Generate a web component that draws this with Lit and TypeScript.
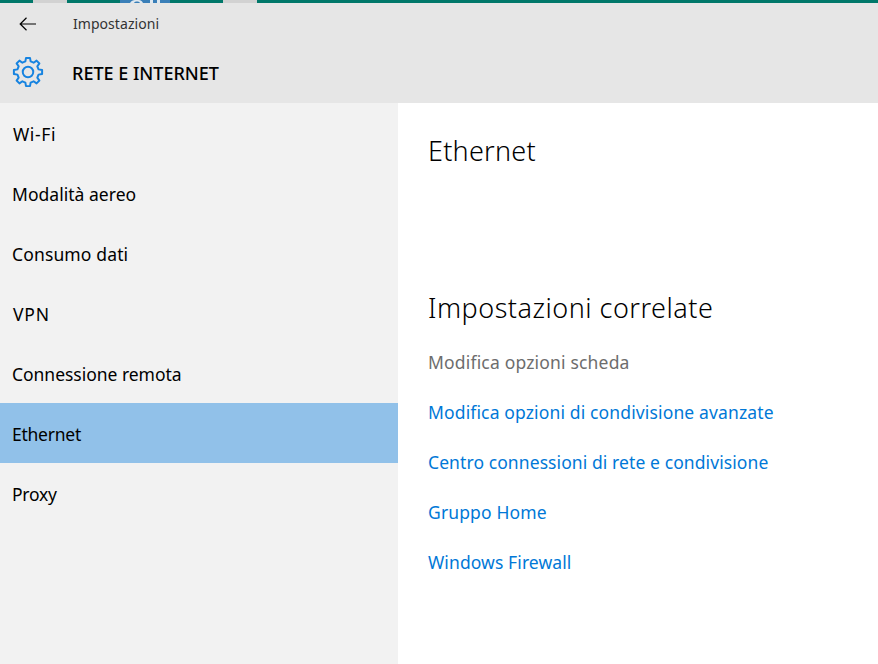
import { LitElement, html, css } from "lit";
import { customElement } from "lit/decorators.js";

const NAV: [string, number, number][] = [
  ["Wi-Fi", 13, 0.6],
  ["Modalità aereo", 12, 0.03],
  ["Consumo dati", 12, 0.14],
  ["VPN", 13, 0.8],
  ["Connessione remota", 12, -0.03],
  ["Ethernet", 12, -0.25],
  ["Proxy", 12, -0.25],
];
const LINKS: [string, number][] = [
  ["Modifica opzioni di condivisione avanzate", 0.14],
  ["Centro connessioni di rete e condivisione", 0.09],
  ["Gruppo Home", 0.14],
  ["Windows Firewall", 0.1],
];

function gearPath(): string {
  const cx = 28, cy = 28, teeth = 8, rO = 15.2, rI = 11.6;
  const pts: string[] = [];
  for (let i = 0; i < teeth; i++) {
    const a = (i * 2 * Math.PI) / teeth - Math.PI / 2;
    const w = Math.PI / teeth;
    const seq: [number, number][] = [
      [rI, a - w * 0.62],
      [rO, a - w * 0.36],
      [rO, a + w * 0.36],
      [rI, a + w * 0.62],
    ];
    for (const [r, t] of seq) {
      pts.push(`${(cx + r * Math.cos(t)).toFixed(2)} ${(cy + r * Math.sin(t)).toFixed(2)}`);
    }
  }
  return "M" + pts.join("L") + "Z";
}

@customElement("app-root")
export class AppRoot extends LitElement {
  static styles = css`
    :host {
      display: flex;
      flex-direction: column;
      width: 878px;
      height: 664px;
      overflow: hidden;
      font-family: "Noto Sans", "Open Sans", sans-serif;
      background: #fff;
      color: #000;
    }
    .strip {
      display: flex;
      height: 3px;
      flex: none;
      background: #00786a;
    }
    .patch { height: 3px; background: #d2d2d2; }
    .p1 { margin-left: 33px; width: 34px; }
    .p2 { margin-left: 53px; width: 50px; background: #3a7fb8; display: block; }
    .p3 { margin-left: 53px; width: 34px; }
    header {
      flex: none;
      height: 100px;
      background: #e6e6e6;
      display: flex;
      flex-direction: column;
    }
    .top {
      height: 41px;
      display: flex;
      align-items: center;
      padding-left: 19px;
      box-sizing: border-box;
    }
    .back { width: 17px; height: 14px; display: block; margin-top: 1px; }
    .app {
      margin-left: 37px;
      font-size: 14px;
      color: #333;
      letter-spacing: 0.05px;
    }
    .title {
      height: 59px;
      display: flex;
      align-items: flex-start;
      padding-left: 13px;
    }
    .gear { width: 30px; height: 30px; display: block; margin-top: 13px; overflow: visible; }
    .title span {
      margin-left: 29px;
      margin-top: 17px;
      font-size: 18px;
      font-weight: 500;
      line-height: 24px;
    }
    .body { flex: 1; display: flex; min-height: 0; }
    nav { width: 398px; flex: none; background: #f2f2f2; }
    .item {
      height: 60px;
      display: flex;
      align-items: center;
      padding-top: 2px;
      font-size: 17.5px;
      box-sizing: border-box;
    }
    .item.on { background: #91c1e9; }
    main { flex: 1; padding: 28px 0 0 30px; }
    h1, h2 { margin: 0; font-weight: 300; }
    h1 { font-size: 27px; line-height: 40px; letter-spacing: 0.25px; }
    h2 { font-size: 27px; line-height: 40px; margin-top: 117px; letter-spacing: 0.5px; }
    .off, .link { font-size: 17.5px; line-height: 50px; }
    .off { color: #6d6d6d; margin-top: 9px; letter-spacing: 0.18px; }
    .link { color: #0078d7; }
  `;

  render() {
    return html`
      <div class="strip">
        <div class="patch p1"></div>
        <svg class="patch p2" viewBox="0 0 50 3">
          <path d="M10 3C11 .5 14 0 17 0s5 .5 6 3h-3c-.5-1-2-1.400-3-1.400S14.500 2 14 3Z" fill="#dfe8ef" />
          <rect x="30" y="0" width="3" height="3" fill="#dfe8ef" />
          <rect x="37" y="0" width="3" height="3" fill="#dfe8ef" />
        </svg>
        <div class="patch p3"></div>
      </div>
      <header>
        <div class="top">
          <svg class="back" viewBox="0 0 17 14" fill="none" stroke="#000" stroke-width="1.2">
            <path d="M17 7H1M7.5 .8L1.2 7l6.3 6.2" />
          </svg>
          <span class="app">Impostazioni</span>
        </div>
        <div class="title">
          <svg class="gear" viewBox="12 12 32 32" fill="none" stroke="#1683e0" stroke-width="2.100" stroke-linejoin="round">
            <path d=${gearPath()} />
            <circle cx="28" cy="28" r="5.6" />
          </svg>
          <span>RETE E INTERNET</span>
        </div>
      </header>
      <div class="body">
        <nav>
          ${NAV.map(
            ([t, x, s]) => html`<div class="item ${t === "Ethernet" ? "on" : ""}" style="padding-left:${x}px;letter-spacing:${s}px">${t}</div>`
          )}
        </nav>
        <main>
          <h1>Ethernet</h1>
          <h2>Impostazioni correlate</h2>
          <div class="off">Modifica opzioni scheda</div>
          ${LINKS.map(([t, s]) => html`<div class="link" style="letter-spacing:${s}px">${t}</div>`)}
        </main>
      </div>
    `;
  }
}
